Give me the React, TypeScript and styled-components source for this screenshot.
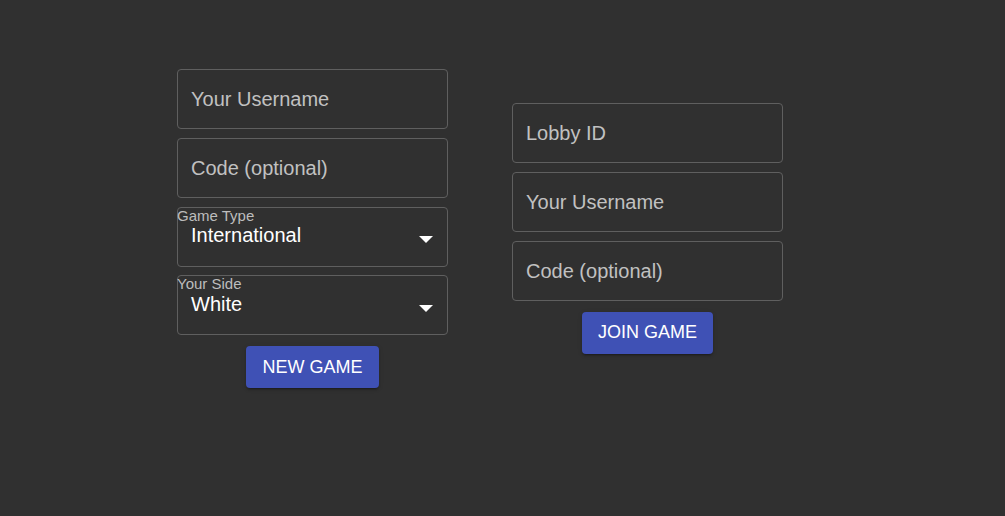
import React from "react";
import styled, { createGlobalStyle } from "styled-components";

const GlobalStyle = createGlobalStyle`
  html, body {
    margin: 0;
    padding: 0;
    background: #303030;
    font-family: "Liberation Sans", Arial, sans-serif;
  }
`;

const Page = styled.div`
  width: 1005px;
  height: 516px;
  box-sizing: border-box;
  padding: 69px 0 0 177px;
  background: #303030;
  display: flex;
  align-items: flex-start;
`;

const Forms = styled.div`
  display: flex;
  align-items: center;
  gap: 64px;
`;

const Column = styled.form`
  width: 271px;
  display: flex;
  flex-direction: column;
  align-items: stretch;
  gap: 8.8px;
  margin: 0;
`;

const Field = styled.div`
  position: relative;
  height: 60px;
  box-sizing: border-box;
  border: 1px solid #5f5f5f;
  border-radius: 4px;
  display: flex;
  align-items: center;
`;

const TextInput = styled.input`
  flex: 1;
  min-width: 0;
  height: 100%;
  box-sizing: border-box;
  border: none;
  outline: none;
  background: transparent;
  padding: 1px 14px 0 13px;
  font-family: "Liberation Sans", Arial, sans-serif;
  font-size: 20px;
  color: #ffffff;
  &::placeholder {
    color: #c1c1c1;
    opacity: 1;
  }
`;

const SelectLabel = styled.span`
  position: absolute;
  top: -1px;
  left: -1px;
  font-size: 15px;
  line-height: 17px;
  color: #bdbdbd;
`;

const SelectValue = styled.span`
  flex: 1;
  padding: 0 0 2px 13px;
  font-size: 20px;
  color: #ffffff;
`;

const Arrow = styled.svg`
  width: 14px;
  height: 7px;
  margin: 6px 14px 0 0;
  flex: none;
`;

const ButtonRow = styled.div`
  display: flex;
  justify-content: center;
  margin-top: 2px;
`;

const Button = styled.button`
  height: 42px;
  padding: 0 16px;
  border: none;
  border-radius: 4px;
  background: #3f51b5;
  color: #ffffff;
  font-family: "Liberation Sans", Arial, sans-serif;
  font-size: 18px;
  text-transform: uppercase;
  cursor: pointer;
  box-shadow: 0px 3px 1px -2px rgba(0, 0, 0, 0.2),
    0px 2px 2px 0px rgba(0, 0, 0, 0.14), 0px 1px 5px 0px rgba(0, 0, 0, 0.12);
`;

const Select: React.FC<{ label: string; value: string }> = ({ label, value }) => (
  <Field>
    <SelectLabel>{label}</SelectLabel>
    <SelectValue>{value}</SelectValue>
    <Arrow viewBox="0 0 14 7">
      <path d="M0 0 L14 0 L7 7 Z" fill="#ffffff" />
    </Arrow>
  </Field>
);

const Text: React.FC<{ placeholder: string }> = ({ placeholder }) => (
  <Field>
    <TextInput placeholder={placeholder} />
  </Field>
);

export default function App() {
  return (
    <>
      <GlobalStyle />
      <Page>
        <Forms>
          <Column onSubmit={(e) => e.preventDefault()}>
            <Text placeholder="Your Username" />
            <Text placeholder="Code (optional)" />
            <Select label="Game Type" value="International" />
            <Select label="Your Side" value="White" />
            <ButtonRow>
              <Button type="button">New Game</Button>
            </ButtonRow>
          </Column>
          <Column onSubmit={(e) => e.preventDefault()}>
            <Text placeholder="Lobby ID" />
            <Text placeholder="Your Username" />
            <Text placeholder="Code (optional)" />
            <ButtonRow>
              <Button type="button">Join Game</Button>
            </ButtonRow>
          </Column>
        </Forms>
      </Page>
    </>
  );
}
